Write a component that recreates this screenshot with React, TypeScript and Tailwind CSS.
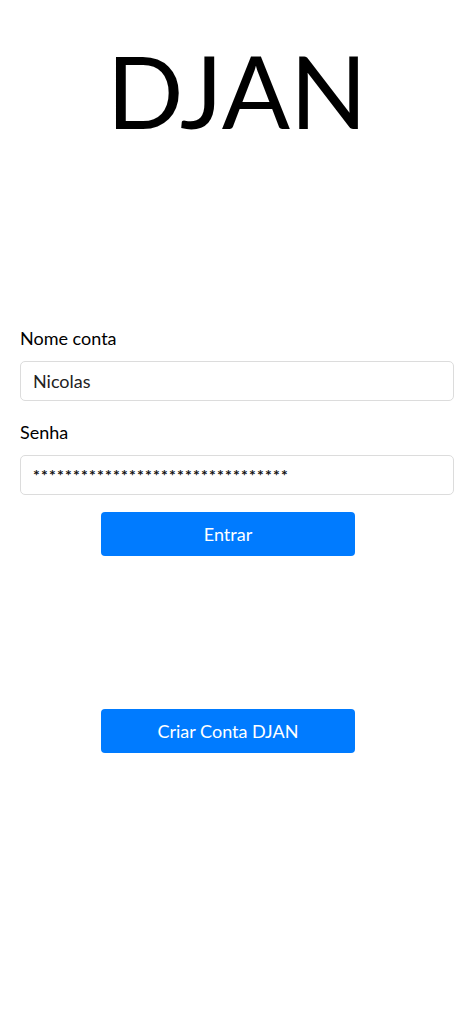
import React from "react";

export default function App() {
  return (
    <div className="w-[474px] h-[1024px] bg-white flex flex-col" style={{ fontFamily: "Lato, 'Noto Sans', sans-serif" }}>
      <div className="h-[180px] flex items-start justify-center pt-[30px]">
        <h1 className="text-[101px] leading-[120px] text-black font-normal">DJAN</h1>
      </div>
      <div className="mt-[144px] px-[20px] flex flex-col">
        <label className="text-[18px] leading-[28px] text-black">Nome conta</label>
        <div className="mt-[9px] h-[40px] w-[434px] border-[1.5px] border-[#dcdcdc] rounded-[5px] flex items-center px-[12px] text-[18px] text-[#222]">
          Nicolas
        </div>
        <label className="mt-[17px] text-[18px] leading-[28px] text-black">Senha</label>
        <div className="mt-[9px] h-[40px] w-[434px] border-[1.5px] border-[#dcdcdc] rounded-[5px] flex items-center px-[12px] text-[16px] font-bold text-[#111] tracking-[1.2px]">
          ********************************
        </div>
      </div>
      <div className="mt-[17px] flex pl-[101px]">
        <button className="w-[254px] h-[44px] bg-[#007bff] rounded-[4px] text-white text-[18px]">Entrar</button>
      </div>
      <div className="mt-[153px] flex pl-[101px]">
        <button className="w-[254px] h-[44px] bg-[#007bff] rounded-[4px] text-white text-[18px]">Criar Conta DJAN</button>
      </div>
    </div>
  );
}
